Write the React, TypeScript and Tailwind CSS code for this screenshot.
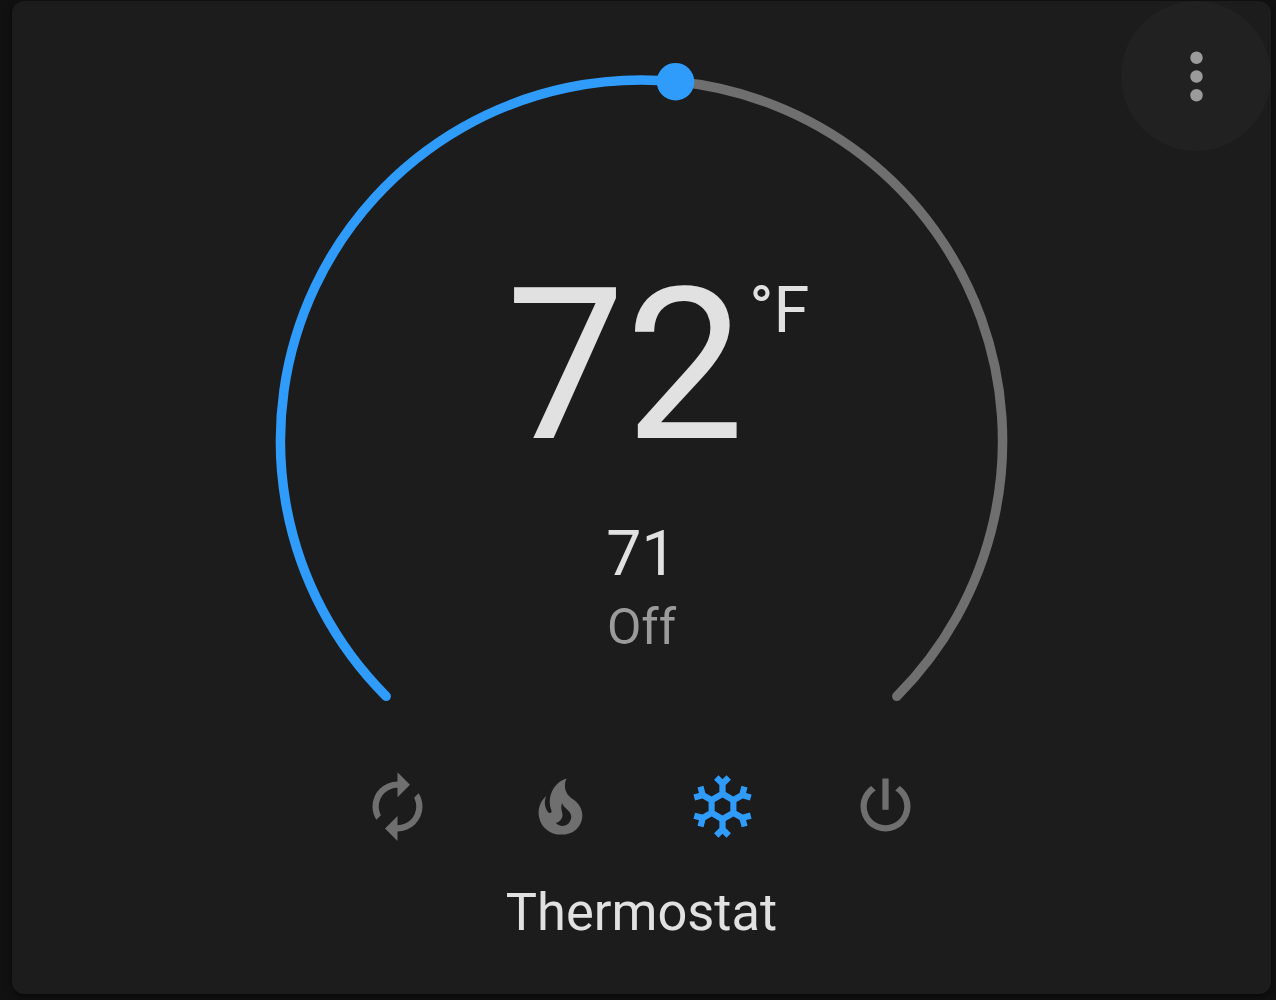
import clsx from "clsx";

interface Mode {
  name: string;
  path: string;
}

const MODES: Mode[] = [
  {
    name: "Auto",
    path: "M12,6V9L16,5L12,1V4A8,8 0 0,0 4,12C4,13.57 4.46,15.03 5.24,16.26L6.7,14.8C6.25,13.97 6,13 6,12A6,6 0 0,1 12,6M18.76,7.74L17.3,9.2C17.74,10.04 18,11 18,12A6,6 0 0,1 12,18V15L8,19L12,23V20A8,8 0 0,0 20,12C20,10.43 19.54,8.97 18.76,7.74Z",
  },
  {
    name: "Heat",
    path: "M17.66 11.2C17.43 10.9 17.15 10.64 16.89 10.38C16.22 9.78 15.46 9.35 14.82 8.72C13.33 7.26 13 4.85 13.95 3C13 3.23 12.17 3.75 11.46 4.32C8.87 6.4 7.85 10.07 9.07 13.22C9.11 13.32 9.15 13.42 9.15 13.55C9.15 13.77 9 13.97 8.8 14.05C8.57 14.15 8.33 14.09 8.14 13.93C8.08 13.88 8.04 13.83 8 13.76C6.87 12.33 6.69 10.28 7.45 8.64C5.78 10 4.87 12.3 5 14.47C5.06 14.97 5.12 15.47 5.29 15.97C5.43 16.57 5.7 17.17 6 17.7C7.08 19.43 8.95 20.67 10.96 20.92C13.1 21.19 15.39 20.8 17.03 19.32C18.86 17.66 19.5 15 18.56 12.72L18.43 12.46C18.22 12 17.66 11.2 17.66 11.2M14.5 17.5C14.22 17.74 13.76 18 13.4 18.1C12.28 18.5 11.16 17.94 10.5 17.28C11.69 17 12.4 16.12 12.61 15.23C12.78 14.43 12.46 13.77 12.33 13C12.21 12.26 12.23 11.63 12.5 10.94C12.69 11.32 12.89 11.7 13.13 12C13.9 13 15.11 13.44 15.37 14.8C15.41 14.94 15.43 15.08 15.43 15.23C15.46 16.05 15.1 16.95 14.5 17.5Z",
  },
  {
    name: "Cool",
    path: "M20.79,13.95L18.46,14.57L16.46,13.44V10.56L18.46,9.43L20.79,10.05L21.31,8.12L19.54,7.65L20,5.88L18.07,5.36L17.45,7.69L15.45,8.82L13,7.38V5.12L14.71,3.41L13.29,2L12,3.29L10.71,2L9.29,3.41L11,5.12V7.38L8.5,8.82L6.5,7.69L5.92,5.36L4,5.88L4.47,7.65L2.7,8.12L3.22,10.05L5.55,9.43L7.55,10.56V13.45L5.55,14.58L3.22,13.96L2.7,15.89L4.47,16.36L4,18.12L5.93,18.64L6.55,16.31L8.55,15.18L11,16.62V18.88L9.29,20.59L10.71,22L12,20.71L13.29,22L14.7,20.59L13,18.88V16.62L15.5,15.17L17.5,16.3L18.12,18.63L20,18.12L19.53,16.35L21.3,15.88L20.79,13.95M9.5,10.56L12,9.11L14.5,10.56V13.44L12,14.89L9.5,13.44V10.56Z",
  },
  {
    name: "Off",
    path: "M16.56,5.44L15.11,6.89C16.84,7.94 18,9.83 18,12A6,6 0 0,1 12,18A6,6 0 0,1 6,12C6,9.83 7.16,7.94 8.88,6.88L7.44,5.44C5.36,6.88 4,9.28 4,12A8,8 0 0,0 12,20A8,8 0 0,0 20,12C20,9.28 18.64,6.88 16.56,5.44M13,3H11V13H13V3Z",
  },
];

function Icon({ path }: { path: string }) {
  return (
    <svg viewBox="0 0 24 24" className="size-[75px] fill-current" aria-hidden="true">
      <path d={path} />
    </svg>
  );
}

function Dial() {
  return (
    <svg
      viewBox="0 0 734 650"
      className="col-start-1 row-start-1 h-[650px] w-[734px]"
      fill="none"
      strokeWidth="9.5"
      strokeLinecap="round"
    >
      <path d="M400.5 21.6A361 361 0 0 1 621.8 636.3" stroke="#6f6f6f" />
      <path d="M111.2 636.3A361 361 0 0 1 400.5 21.6" stroke="#2f9bfa" />
      <circle cx="400.5" cy="21.7" r="18.8" fill="#2f9bfa" />
    </svg>
  );
}

export default function App() {
  return (
    <main className="h-[1000px] w-[1276px] bg-[#111111] pt-px pl-3 font-[Roboto,sans-serif]">
      <section className="relative flex h-[993px] w-[1259px] flex-col items-center rounded-xl bg-[#1c1c1c] pt-[59px] text-[#e1e1e1] shadow-[0_3px_6px_rgba(0,0,0,0.5)]">
        <button
          aria-label="More"
          className="absolute top-0 right-0 flex size-[150px] items-center justify-center rounded-full bg-[#212121] text-[#9b9b9b]"
        >
          <Icon path="M12,16A2,2 0 0,1 14,18A2,2 0 0,1 12,20A2,2 0 0,1 10,18A2,2 0 0,1 12,16M12,10A2,2 0 0,1 14,12A2,2 0 0,1 12,14A2,2 0 0,1 10,12A2,2 0 0,1 12,10M12,4A2,2 0 0,1 14,6A2,2 0 0,1 12,8A2,2 0 0,1 10,6A2,2 0 0,1 12,4Z" />
        </button>

        <div className="grid">
          <Dial />
          <div className="col-start-1 row-start-1 flex flex-col items-center pt-[200px]">
            <div className="flex w-[271px] items-start whitespace-nowrap">
              <span className="text-[212px] leading-[212px]">72</span>
              <span className="ml-[5px] pt-[18px] text-[65px] leading-[65px]">°F</span>
            </div>
            <div className="mt-[50px] text-[62.5px] leading-[64px]">71</div>
            <div className="mt-[13px] text-[50px] leading-[56px] text-[#9b9b9b]">Off</div>
          </div>
        </div>

        <div className="mt-[59px] flex gap-[87.5px]">
          {MODES.map((mode) => (
            <button
              key={mode.name}
              aria-label={mode.name}
              className={clsx(mode.name === "Cool" ? "text-[#2f9bfa]" : "text-[#6f6f6f]")}
            >
              <Icon path={mode.path} />
            </button>
          ))}
        </div>

        <h1 className="mt-[36px] text-[52.4px] leading-[64px]">Thermostat</h1>
      </section>
    </main>
  );
}
